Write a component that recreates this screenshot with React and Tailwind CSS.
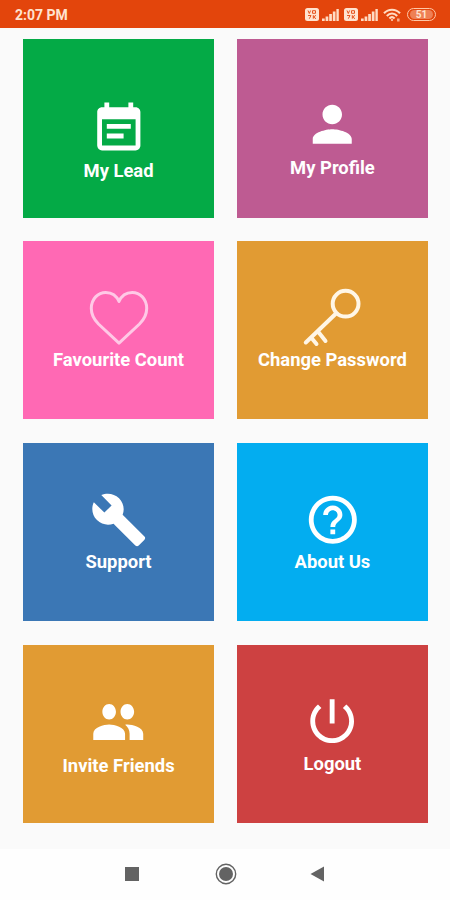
import React from "react";

const PATHS = {
  note: "M17 10H7v2h10v-2zm2-7h-1V1h-2v2H8V1H6v2H5c-1.11 0-1.99.9-1.99 2L3 19a2 2 0 0 0 2 2h14c1.1 0 2-.9 2-2V5c0-1.1-.9-2-2-2zm0 16H5V8h14v11zm-5-5H7v2h7v-2z",
  person:
    "M12 12c2.21 0 4-1.79 4-4s-1.79-4-4-4-4 1.79-4 4 1.79 4 4 4zm0 2c-2.67 0-8 1.34-8 4v2h16v-2c0-2.66-5.33-4-8-4z",
  wrench:
    "M22.7 19l-9.1-9.1c.9-2.3.4-5-1.5-6.9-2-2-5-2.4-7.4-1.3L9 6 6 9 1.6 4.7C.4 7.1.9 10.1 2.9 12.1c1.9 1.9 4.6 2.4 6.9 1.5l9.1 9.1c.4.4 1 .4 1.4 0l2.3-2.3c.5-.4.5-1.1.1-1.4z",
  help: "M11 18h2v-2h-2v2zm1-16C6.48 2 2 6.48 2 12s4.48 10 10 10 10-4.48 10-10S17.52 2 12 2zm0 18c-4.41 0-8-3.59-8-8s3.59-8 8-8 8 3.59 8 8-3.59 8-8 8zm0-14c-2.21 0-4 1.79-4 4h2c0-1.1.9-2 2-2s2 .9 2 2c0 2-3 1.75-3 5h2c0-2.25 3-2.5 3-5 0-2.21-1.79-4-4-4z",
  people:
    "M16 11c1.66 0 2.99-1.34 2.99-3S17.66 5 16 5c-1.66 0-3 1.34-3 3s1.34 3 3 3zm-8 0c1.66 0 2.99-1.34 2.99-3S9.66 5 8 5C6.34 5 5 6.34 5 8s1.34 3 3 3zm0 2c-2.33 0-7 1.17-7 3.5V19h14v-2.5c0-2.33-4.67-3.5-7-3.5zm8 0c-.29 0-.62.02-.97.05 1.16.84 1.97 1.97 1.97 3.45V19h6v-2.5c0-2.33-4.67-3.5-7-3.5z",
  power:
    "M13 3h-2v10h2V3zm4.83 2.17l-1.42 1.42C17.99 7.86 19 9.81 19 12c0 3.87-3.13 7-7 7s-7-3.13-7-7c0-2.19 1.01-4.14 2.58-5.42L6.17 5.17C4.23 6.82 3 9.26 3 12c0 4.97 4.03 9 9 9s9-4.03 9-9c0-2.74-1.23-5.18-3.17-6.83z",
};

function Glyph({ name, className }) {
  return (
    <svg viewBox="0 0 24 24" preserveAspectRatio="none" fill="currentColor" className={`shrink-0 ${className}`}>
      <path d={PATHS[name]} />
    </svg>
  );
}

function Heart() {
  return (
    <svg viewBox="0 0 60 58" fill="none" className="mt-[48px] h-[58px] w-[60px] shrink-0 text-[#ffc9e6]">
      <path
        d="M30 54.2L9.5 35C4.5 30 2.3 25 2.3 19.500 2.3 10 9 3.400 16.8 3.400 22.8 3.400 27.6 6.800 30 12.500 32.4 6.800 37.2 3.400 43.2 3.400 51 3.400 57.7 10 57.7 19.500c0 5.5-2.2 10.5-7.2 15.500z"
        stroke="currentColor"
        strokeWidth="3"
        strokeLinejoin="round"
      />
    </svg>
  );
}

function Key() {
  return (
    <svg viewBox="0 0 60 60" fill="none" className="mt-[46px] h-[60px] w-[60px] shrink-0 text-[#fff6e6]">
      <g stroke="currentColor" strokeWidth="4" strokeLinecap="round">
        <circle cx="43.600" cy="16.700" r="12.900" />
        <path d="M34 26.500L3.800 55.500M9.500 51L14.500 57M16 44.500L23.500 54" />
      </g>
    </svg>
  );
}

const TILES = [
  { label: "My Lead", bg: "bg-[#04aa46]", icon: <Glyph name="note" className="mt-[60.500px] size-[57.600px]" />, text: "mt-[3px]" },
  { label: "My Profile", bg: "bg-[#be5b92]", icon: <Glyph name="person" className="mt-[56px] size-[58.500px]" />, text: "mt-[3px]" },
  { label: "Favourite Count", bg: "bg-[#ff69b4]", icon: <Heart />, text: "mt-[2px]" },
  { label: "Change Password", bg: "bg-[#e19b33]", icon: <Key />, text: "mt-[2px]" },
  { label: "Support", bg: "bg-[#3b77b5]", icon: <Glyph name="wrench" className="mt-[47.800px] size-[57.600px]" />, text: "mt-[3px]" },
  { label: "About Us", bg: "bg-[#03adf0]", icon: <Glyph name="help" className="mt-[47.800px] size-[57.600px]" />, text: "mt-[3px]" },
  { label: "Invite Friends", bg: "bg-[#e19b33]", icon: <Glyph name="people" className="mt-[46px] h-[62px] w-[54.500px]" />, text: "mt-[2px]" },
  { label: "Logout", bg: "bg-[#cd4141]", icon: <Glyph name="power" className="mt-[47.500px] size-[58.300px]" />, text: "mt-[2px]" },
];

function Sim() {
  return (
    <svg viewBox="0 0 14 13" className="h-[13px] w-[14px]">
      <rect x="0" y="0" width="14" height="13" rx="2.500" fill="#ffe3d0" />
      <g fill="none" stroke="#e3450c" strokeWidth="0.900">
        <path d="M3 2.500l1.300 3 1.300-3M7.500 2.700h3v2.600h-3zM3 7.500h3l-1.700 3.200M8.300 7.200v3.500M11 7.300L8.600 9l2.400 1.700" />
      </g>
    </svg>
  );
}

function Bars() {
  return (
    <svg viewBox="0 0 17 12" className="h-[12px] w-[17px]" fill="#ffdcc4">
      <rect x="0" y="9.500" width="2.700" height="2.500" />
      <rect x="3.600" y="7.500" width="2.700" height="4.500" />
      <rect x="7.200" y="5" width="2.700" height="7" />
      <rect x="10.800" y="2.500" width="2.700" height="9.500" />
      <rect x="14.400" y="0" width="2.400" height="12" />
    </svg>
  );
}

function Wifi() {
  return (
    <svg viewBox="0 0 18 14" className="ml-[5px] h-[14px] w-[18px]" fill="none" stroke="#ffdcc4" strokeWidth="2.100">
      <path d="M1 5.200C5.500 0.500 12.500 0.500 17 5.200M3.800 8C7 4.700 11 4.700 14.200 8M6.400 10.400C8 8.800 10 8.800 11.600 10.400" />
      <circle cx="9" cy="12.100" r="1" fill="#ffdcc4" stroke="none" />
      <path d="M15.300 10.500v3" strokeWidth="2.500" opacity="0.700" />
    </svg>
  );
}

function StatusBar() {
  return (
    <header className="flex h-[28px] items-center justify-between bg-[#e3450c] pr-[14px] pl-[15px] text-[#ffe3d0]">
      <span className="pt-[1px] text-[14px] leading-4 font-bold">2:07 PM</span>
      <div className="flex items-center pt-[1px]">
        <Sim />
        <span className="ml-[3px]"><Bars /></span>
        <span className="ml-[5px]"><Sim /></span>
        <span className="ml-[3px]"><Bars /></span>
        <Wifi />
        <div className="ml-[6px] flex h-[13px] w-[29px] items-center justify-center rounded-full border-[1.500px] border-[#ffc7a6] bg-[#e3450c]">
          <span className="flex h-[9px] w-[23px] items-center justify-center rounded-full bg-[#ee8055] text-[10px] leading-none font-bold">51</span>
        </div>
      </div>
    </header>
  );
}

function NavBar() {
  return (
    <nav className="flex h-[51px] items-center bg-[#fefefe] pb-[2px] pl-[125px] text-[#636363]">
      <span className="mr-[76px] size-[14px] bg-current" />
      <svg viewBox="0 0 22 22" className="size-[22px]">
        <circle cx="11" cy="11" r="9.700" fill="none" stroke="currentColor" strokeWidth="1.400" />
        <circle cx="11" cy="11" r="7" fill="currentColor" />
      </svg>
      <svg viewBox="0 0 14 16" className="ml-[73px] h-[16px] w-[14px]" fill="currentColor">
        <path d="M14 0.500v15L0.500 8z" />
      </svg>
    </nav>
  );
}

export default function App() {
  return (
    <div className="flex h-[900px] w-[450px] flex-col overflow-hidden bg-[#fafafa] font-[Roboto,'Liberation_Sans',sans-serif]">
      <StatusBar />
      <main className="grid flex-1 grid-cols-[190.300px_190.300px] content-start gap-x-[23.600px] gap-y-[23.600px] pt-[11.400px] pl-[23.400px]">
        {TILES.map((t) => (
          <section key={t.label} className={`flex h-[178.200px] flex-col items-center text-white ${t.bg}`}>
            {t.icon}
            <h2 className={`text-[18.400px] leading-[22px] font-bold whitespace-nowrap ${t.text}`}>{t.label}</h2>
          </section>
        ))}
      </main>
      <NavBar />
    </div>
  );
}
